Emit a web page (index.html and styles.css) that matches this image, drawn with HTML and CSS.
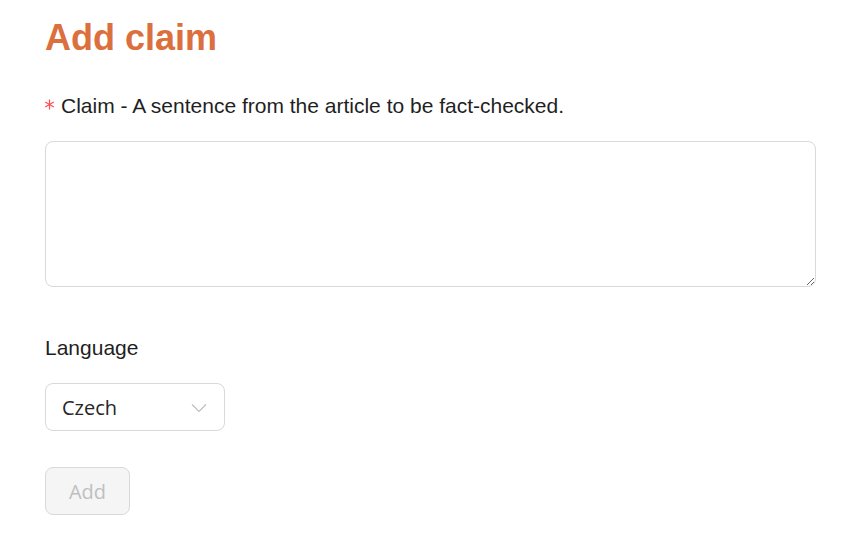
FILE: index.html
```html
<!DOCTYPE html>
<html>
<head>
<meta charset="utf-8">
<link rel="stylesheet" href="styles.css">
</head>
<body>
<div class="page">
  <h1 class="title">Add claim</h1>
  <form class="form">
    <div class="field">
      <label class="label"><svg class="req" width="11" height="11" viewBox="0 0 11 11"><g stroke="#ff4d4f" stroke-width="1.2" fill="none"><path d="M5.5 0.5 V10.5"/><path d="M1.2 3 L9.8 8"/><path d="M1.2 8 L9.8 3"/></g></svg>Claim - A sentence from the article to be fact-checked.</label>
      <textarea class="textarea"></textarea>
    </div>
    <div class="field field-lang">
      <label class="label">Language</label>
      <div class="select">
        <span class="select-value">Czech</span>
        <svg class="chevron" width="16" height="10" viewBox="0 0 16 10"><path d="M1 1.5 L8 8.5 L15 1.5" fill="none" stroke="#bfbfbf" stroke-width="1.2"/></svg>
      </div>
    </div>
    <button type="button" class="btn" disabled>Add</button>
  </form>
</div>
</body>
</html>
```
FILE: styles.css
```css
html, body {
  margin: 0;
  padding: 0;
  background: #fff;
}
.page {
  padding: 16px 43px 0 45px;
  font-family: "Liberation Sans", Arial, sans-serif;
}
.title {
  margin: 0;
  font-size: 36px;
  line-height: 44px;
  font-weight: bold;
  color: #db6f3e;
}
.form {
  display: flex;
  flex-direction: column;
  margin-top: 33px;
}
.field {
  display: flex;
  flex-direction: column;
}
.label {
  font-size: 21px;
  line-height: 25px;
  color: #1f1f1f;
  display: flex;
  align-items: center;
}
.req {
  margin-left: -1px;
  margin-right: 6px;
  margin-top: -3px;
}
.textarea {
  margin-top: 23px;
  width: 771px;
  height: 146px;
  box-sizing: border-box;
  border: 1px solid #d9d9d9;
  border-radius: 8px;
  padding: 8px 12px;
  resize: vertical;
  font-family: "Open Sans", sans-serif;
}
.field-lang {
  margin-top: 48px;
}
.select {
  margin-top: 23px;
  width: 180px;
  height: 48px;
  box-sizing: border-box;
  border: 1px solid #d9d9d9;
  border-radius: 8px;
  display: flex;
  align-items: center;
  justify-content: space-between;
  padding: 0 17px 0 16px;
  font-family: "Open Sans", sans-serif;
  font-size: 20px;
  color: #262626;
}
.chevron {
  margin-top: 1px;
}
.btn {
  margin-top: 36px;
  width: 85px;
  height: 48px;
  box-sizing: border-box;
  border: 1px solid #d9d9d9;
  border-radius: 8px;
  background: #f5f5f5;
  color: #bfbfbf;
  font-family: "Open Sans", sans-serif;
  font-size: 20px;
  padding: 0;
}
```
